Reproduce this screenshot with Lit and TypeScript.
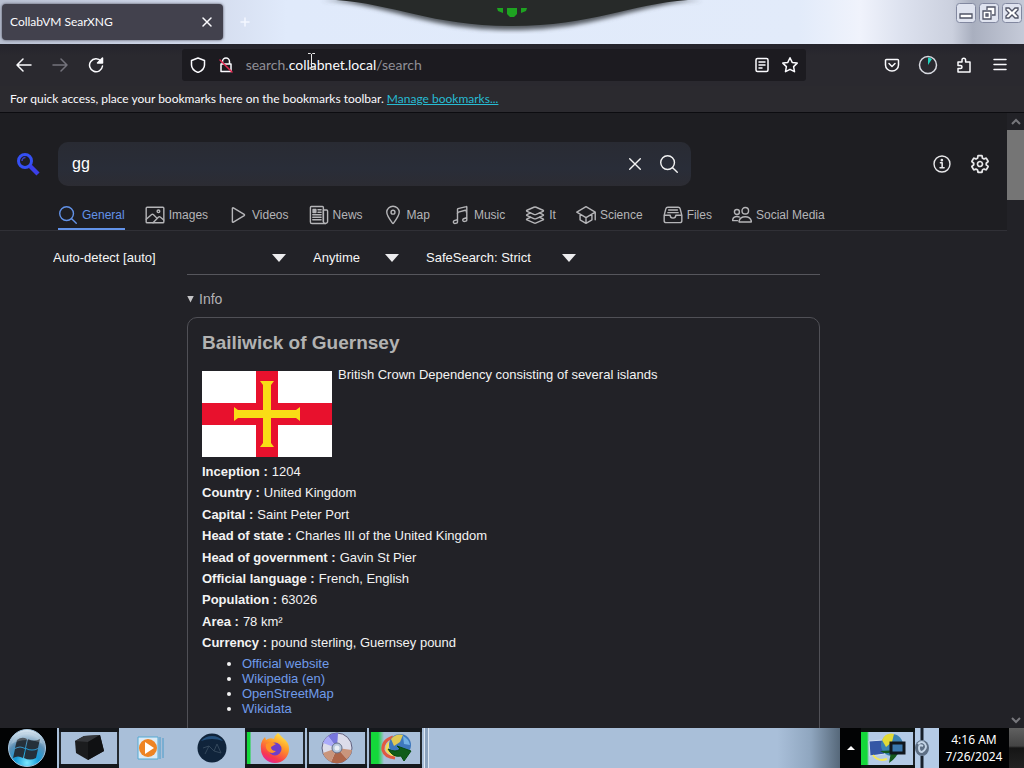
import { LitElement, html, css, svg } from "lit";
import { customElement } from "lit/decorators.js";

const ion = (body: unknown) => html`<svg class="ion" viewBox="0 0 512 512" aria-hidden="true">${body}</svg>`;

const searchGlyph = svg`<path d="M221 64a157 157 0 1 0 157 157A157 157 0 0 0 221 64z"/><path d="M338 338L448 448"/>`;
const wideSearchGlyph = svg`<circle cx="220" cy="220" r="176"/><path d="M350 350L468 468"/>`;

const categories = [
  { name: "General", icon: wideSearchGlyph },
  { name: "Images", icon: svg`<rect x="30" y="56" width="452" height="400" rx="24"/><circle cx="344" cy="160" r="34"/><path d="M304 336l-91-91a32 32 0 0 0-44-1L32 366M206 456l141-147a32 32 0 0 1 43-2l90 76"/>` },
  { name: "Videos", icon: svg`<path d="M112 86v340c0 14 12 22 26 14l276-168c12-8 12-24 0-32L138 72c-14-8-26 0-26 14z"/>` },
  { name: "News", icon: svg`<path d="M368 416V64a24 24 0 0 0-24-24H60a24 24 0 0 0-24 24v368a40 40 0 0 0 40 40h340"/><path d="M424 472a52 52 0 0 1-56-52V128h84a24 24 0 0 1 24 24v268a50 50 0 0 1-52 52z"/><path d="M230 120h80M230 184h80M96 248h214M96 312h214M96 376h214"/><path fill="currentColor" d="M104 112h72v80h-72z"/>` },
  { name: "Map", icon: svg`<path d="M256 32c-86 0-160 66-160 150 0 92 108 232 147 283a16 16 0 0 0 26 0c39-51 147-191 147-283 0-84-74-150-160-150z"/><circle cx="256" cy="184" r="50"/>` },
  { name: "Music", icon: svg`<path d="M192 218v-6c0-15 10-27 24-31l175-47a20 20 0 0 1 25 20v22"/><path d="M430 296v86c0 14-9 26-22 30l-30 9c-26 9-52-10-52-38a33 33 0 0 1 23-32l59-19c13-4 22-16 22-30V50a10 10 0 0 0-13-10L204 94a16 16 0 0 0-12 16v242c0 14-9 26-22 30l-62 20c-14 5-22 17-22 32 0 28 27 47 52 38l32-10c13-4 22-16 22-30v-80"/>` },
  { name: "It", icon: svg`<path d="M460 134l-174-76c-16-7-43-7-59 0L52 134c-18 8-18 21 0 29l174 76c17 8 44 8 61 0l174-76c17-8 17-21-1-29zM144 314l-92 40c-18 8-18 21 0 29l174 76c17 8 44 8 61 0l174-76c18-8 18-21 0-29l-90-40"/><path d="M144 204l-92 40c-18 8-18 21 0 29l174 76c17 8 44 8 61 0l174-76c18-8 18-21 0-29l-92-40"/>` },
  { name: "Science", icon: svg`<path d="M20 184L256 44l236 140-236 140L20 184zM104 236v144l152 88 152-88V236M492 380V184M256 324v144"/>` },
  { name: "Files", icon: svg`<path d="M388 56H124c-28 0-46 14-52 42L30 264v136a52 52 0 0 0 52 52h348a52 52 0 0 0 52-52V264L440 98c-6-28-26-42-52-42zM30 264h154M328 264h154M184 264a72 72 0 0 0 144 0M144 128h224M124 196h264"/>` },
  { name: "Social Media", icon: svg`<circle cx="340" cy="146" r="84"/><path d="M340 300c-80 0-144 36-160 116-2 10 4 18 12 18h292c8 0 14-8 12-18-16-80-76-116-156-116z"/><circle cx="126" cy="180" r="64"/><path d="M190 308c-20-10-42-13-62-13-56 0-104 30-112 92-2 8 2 14 10 14h114"/>` },
];

const facts = [
  ["Inception", "1204"],
  ["Country", "United Kingdom"],
  ["Capital", "Saint Peter Port"],
  ["Head of state", "Charles III of the United Kingdom"],
  ["Head of government", "Gavin St Pier"],
  ["Official language", "French, English"],
  ["Population", "63026"],
  ["Area", "78 km²"],
  ["Currency", "pound sterling, Guernsey pound"],
];

const sites = ["Official website", "Wikipedia (en)", "OpenStreetMap", "Wikidata"];

const resetStyles = css`
  * { box-sizing: border-box; }
  button { border: 0; padding: 0; margin: 0; background: none; color: inherit; font: inherit; display: grid; place-items: center; }
  svg { display: block; flex: none; }
`;

@customElement("browser-chrome")
export class BrowserChrome extends LitElement {
  static styles = [resetStyles, css`
    :host { display: block; flex: none; font: 12px/16px Lato, "Open Sans", sans-serif; color: #fbfbfe; }
    .strip {
      position: relative; height: 44px; padding: 4px 0 4px 2px; display: flex; align-items: center;
      background: linear-gradient(90deg, #b9c0d2 0, #d3dbed 20%, #e0eafb 28%, #e2ebfa 78%, #f0f3fc 84%, #dde2ef 88%, #cbd0de 93%, #a9afbf 95%, #c5cad8 100%);
    }
    .tab {
      width: 221px; height: 36px; padding: 0 10px 0 8px; border-radius: 4px; background: #42414d;
      display: flex; align-items: center; justify-content: space-between; box-shadow: 0 0 3px #4a4b5a;
    }
    .new { margin-left: 14px; color: #f4f7ff; width: 16px; height: 16px; }
    .curtain { position: absolute; top: 0; left: 318px; width: 388px; height: 34px; }
    .controls { position: absolute; top: 3px; right: 2px; display: flex; gap: 3px; }
    .nav { height: 42px; padding: 0 6px; display: flex; align-items: center; background: linear-gradient(#25242c, #2a292f 12px); }
    .nav button { width: 36px; height: 32px; }
    .dim { color: #74737c; }
    .gap { flex: 1 1 0; }
    .url {
      flex: 9 1 0; height: 32px; padding: 0 8px; display: flex; align-items: center; gap: 12px;
      background: #1c1b20; border-radius: 3px; font-size: 14px;
    }
    .address { flex: 1; color: #8f8e96; white-space: nowrap; }
    .host { color: #fbfbfe; }
    .marks { height: 27px; padding: 5px 10px 0; background: #2b2a2f; border-bottom: 1px solid #0c0c10; white-space: nowrap; }
    .marks a { color: #27bcd3; }
    .line { fill: none; stroke: currentColor; stroke-width: 1.5; stroke-linecap: round; stroke-linejoin: round; }
    .caret { position: absolute; left: 307px; top: 53px; }
  `];

  render() {
    return html`
      <div class="strip">
        <div class="tab">
          <span>CollabVM SearXNG</span>
          <button aria-label="Close tab"><svg class="line" width="12" height="12" viewBox="0 0 12 12"><path d="M2 2l8 8M10 2l-8 8"/></svg></button>
        </div>
        <button class="new" aria-label="New tab"><svg class="line" width="12" height="12" viewBox="0 0 12 12"><path d="M6 2v8M2 6h8"/></svg></button>
        <svg class="curtain" viewBox="0 0 388 34" aria-hidden="true">
          <defs><filter id="soft" x="-10%" y="-50%" width="120%" height="200%"><feGaussianBlur stdDeviation="2"/></filter></defs>
          <path filter="url(#soft)" fill="#555a60" d="M4 0C70 4 108 30 194 30S318 4 384 0z"/>
          <path fill="#272a29" d="M18 0C76 4 114 26 194 26S312 4 370 0z"/>
          <path fill="#1ea321" d="M179 8h6v5l-5-2zM209 8h-6v5l5-2zM189 8h10v6l-3 3h-4l-3-3z"/>
        </svg>
        <div class="controls">
          ${[
            ["Minimize", svg`<path d="M4 11h12v4H4z"/>`],
            ["Restore", svg`<path d="M8 7V4h8v8h-3M4 8h8v8H4zM7 11h2v2H7z"/>`],
            ["Close", svg`<path d="M4 5h3l3 3 3-3h3v2l-3 3 3 3v2h-3l-3-3-3 3H4v-2l3-3-3-3z"/>`],
          ].map(([label, d]) => html`<button aria-label=${label}><svg width="20" height="20" viewBox="0 0 20 20"><rect x="0.500" y="0.500" width="19" height="19" rx="3" fill="#dfe3ef" stroke="#8288a0"/><g fill="#fff" stroke="#505466" stroke-width="1.300">${d}</g></svg></button>`)}
        </div>
      </div>
      <div class="nav">
        <button aria-label="Back"><svg class="line" width="16" height="16" viewBox="0 0 16 16"><path d="M15 8H1M7 2L1 8l6 6"/></svg></button>
        <button class="dim" aria-label="Forward"><svg class="line" width="16" height="16" viewBox="0 0 16 16"><path d="M1 8h14M9 2l6 6-6 6"/></svg></button>
        <button aria-label="Reload"><svg class="line" width="16" height="16" viewBox="0 0 16 16"><path d="M13 4a6.500 6.500 0 1 0 1.500 5"/><path fill="currentColor" d="M14.500 1v5h-5z"/></svg></button>
        <span class="gap"></span>
        <div class="url">
          <svg class="line" width="16" height="16" viewBox="0 0 16 16"><path d="M8 1l6.500 2.500V8c0 3.500-3 6-6.500 7.500C4.500 14 1.500 11.500 1.500 8V3.500z"/></svg>
          <svg class="line" width="16" height="16" viewBox="0 0 16 16"><path d="M4.500 7V4.500a3.500 3.500 0 0 1 7 0V7M3 7h10v7.500H3z"/><path stroke="#e22850" d="M2 3l12 12"/></svg>
          <span class="address">search.<span class="host">collabnet.local</span>/search</span>
          <svg class="line" width="16" height="16" viewBox="0 0 16 16"><rect x="2" y="1.500" width="12" height="13" rx="1.500"/><path d="M5 5h6M5 8h6M5 11h3"/></svg>
          <svg class="line" width="16" height="16" viewBox="0 0 16 16"><path d="M8 .8l2.200 4.600 5 .7-3.600 3.500.9 5.100L8 12.300l-4.500 2.400.9-5.100L.8 6.100l5-.7z"/></svg>
        </div>
        <span class="gap"></span>
        <button aria-label="Pocket"><svg class="line" width="16" height="16" viewBox="0 0 16 16"><path d="M2.500 2.500h11a1 1 0 0 1 1 1V8a6.500 6 0 0 1-13 0V3.500a1 1 0 0 1 1-1zM5 6.500l3 3 3-3"/></svg></button>
        <button aria-label="Extension"><svg width="20" height="20" viewBox="0 0 20 20"><circle cx="10" cy="10" r="8.500" fill="none" stroke="#d7d9e0" stroke-width="1.500"/><path fill="#21d3bd" d="M10 10V2.500a8 8 0 0 1 4 1.500z"/></svg></button>
        <button aria-label="Extensions"><svg class="line" width="16" height="16" viewBox="0 0 16 16"><path d="M2 5h4V3a1.800 1.800 0 0 1 3.600 0v2H14v10H2v-3.500h2.500a1.500 1.500 0 0 0 0-3H2z"/></svg></button>
        <button aria-label="Menu"><svg class="line" width="16" height="16" viewBox="0 0 16 16"><path d="M2 2.500h12M2 7.500h12M2 12.500h12"/></svg></button>
      </div>
      <div class="marks">For quick access, place your bookmarks here on the bookmarks toolbar. <a href="#">Manage bookmarks...</a></div>
      <svg class="caret" width="9" height="16" viewBox="0 0 9 16" aria-hidden="true"><path fill="none" stroke="#e8e8e8" d="M1 .5h2.500l1 1 1-1H8M4.500 1v13M1 15h2.500l1-1 1 1H8"/></svg>
    `;
  }
}

@customElement("search-page")
export class SearchPage extends LitElement {
  static styles = [resetStyles, css`
    :host { display: flex; flex: 1 1 0; min-height: 0; overflow: hidden; background: #222227; color: #f3f3f3; font: 13px/16px "Liberation Sans", Arial, sans-serif; }
    main { flex: 1; min-width: 0; }
    a { color: #6f9bea; text-decoration: none; }
    .ion { width: 20px; height: 20px; fill: none; stroke: currentColor; stroke-width: 36; stroke-linejoin: round; stroke-linecap: round; }
    header { background: #1e1e22; border-bottom: 1px solid #303036; padding-top: 29px; }
    .top { display: flex; align-items: center; padding-right: 17px; }
    .logo { width: 58px; padding-left: 16px; }
    .box { flex: 0 1 633px; height: 44px; border-radius: 10px; background: linear-gradient(#292b33, #292d38 60%, #2c2c33); display: flex; align-items: center; padding: 0 12px 0 14px; }
    .box input { flex: 1; min-width: 0; border: 0; outline: 0; padding: 0; background: none; color: #fff; font: 16px/20px "Liberation Sans", Arial, sans-serif; }
    .box .clear { margin-right: 14px; }
    .tools { margin-left: auto; display: flex; gap: 18px; }
    .tools a { color: #e8e8ea; }
    .tabs { display: flex; gap: 20px; padding: 14px 0 0 58px; }
    .cat { display: flex; align-items: center; gap: 4px; height: 30px; padding-top: 2px; color: #b5b5b8; font-size: 12px; white-space: nowrap; border-bottom: 2px solid transparent; }
    .cat.on { color: #6292e8; border-color: #6292e8; }
    .filters { display: flex; gap: 27px; padding: 17px 0 0 53px; }
    .pick { display: grid; align-items: center; }
    .pick select { grid-area: 1 / 1; appearance: none; border: 0; background: none; color: #f6f6f6; font: inherit; height: 20px; padding: 0 26px 0 0; outline: 0; }
    .pick::after { content: ""; grid-area: 1 / 1; justify-self: end; width: 14px; height: 8px; background: #ececee; clip-path: polygon(0 0, 100% 0, 50% 100%); pointer-events: none; }
    .lang { width: 233px; }
    .time { width: 86px; }
    .safe { width: 150px; }
    .results { margin-left: 187px; max-width: 633px; margin-top: 6px; border-top: 1px solid #56565c; }
    summary { list-style: none; display: flex; align-items: center; gap: 5px; padding: 16px 0 10px; font-size: 14px; color: #b2b2b4; }
    summary::before { content: ""; width: 7px; height: 7px; background: #c4c4c6; clip-path: polygon(0 0, 100% 0, 50% 100%); }
    .card { border: 1px solid #505056; border-radius: 10px; padding: 13px 14px; min-height: 440px; }
    h2 { margin: 0 0 12px; font-size: 19px; line-height: 24px; color: #b2b2b2; }
    .intro { display: flex; gap: 6px; margin-bottom: 4px; }
    .intro p { margin: 0; }
    .flag { width: 130px; height: 86px; margin-top: 4px; }
    .facts { margin: 0 0 3px; display: flex; flex-direction: column; justify-content: space-between; min-height: 192px; line-height: 21px; }
    .fact { display: flex; gap: 4px; }
    dt { font-weight: bold; }
    dd { margin: 0; }
    ul { margin: 0; padding-left: 40px; line-height: 15px; }
    .bar { width: 17px; background: #222227; display: flex; flex-direction: column; align-items: center; color: #77777c; }
    .thumb { width: 17px; height: 70px; background: #757575; }
    .bar button { height: 17px; width: 17px; }
    .bar .down { margin-top: auto; }
    .thin { fill: none; stroke: currentColor; stroke-width: 2; }
  `];

  render() {
    return html`
      <main>
        <header>
          <div class="top">
            <a class="logo" href="#" aria-label="Home"><svg width="24" height="24" viewBox="0 0 24 24"><circle cx="9" cy="9" r="6.500" fill="none" stroke="#3550f4" stroke-width="3"/><path stroke="#3b3fe8" stroke-width="4.500" d="M14 14l8 8"/><path fill="none" stroke="#3d3fc4" stroke-width="1.500" d="M6 9a3.500 3.500 0 0 1 3.500-3.500"/></svg></a>
            <form class="box" role="search" @submit=${(e: Event) => e.preventDefault()}>
              <input aria-label="Search for" .value=${"gg"} />
              <button class="clear" type="reset" aria-label="Clear">${ion(svg`<path d="M392 392L120 120M392 120L120 392"/>`)}</button>
              <button type="submit" aria-label="Search">${ion(wideSearchGlyph)}</button>
            </form>
            <div class="tools">
              <a href="#" aria-label="About">${ion(svg`<circle cx="256" cy="256" r="204"/><path stroke-width="40" d="M216 224h44v128M206 352h104"/><circle cx="252" cy="158" r="16" fill="currentColor"/>`)}</a>
              <a href="#" aria-label="Preferences">${ion(svg`<path stroke-width="44" d="M262.300 192.300a64 64 0 1 0 57.400 57.400 64 64 0 0 0-57.400-57.400zM416.400 256a154 154 0 0 1-1.500 20.800l45.200 35.400a11 11 0 0 1 2.400 13.800l-42.800 74a11 11 0 0 1-13.100 4.600l-44.900-18a16 16 0 0 0-15.200 1.700A164 164 0 0 1 325 400.800a16 16 0 0 0-8.800 12.100l-6.700 47.900a11 11 0 0 1-10.700 9.200h-85.600a11 11 0 0 1-10.700-8.900l-6.700-47.800a16 16 0 0 0-9-12.200 155 155 0 0 1-21.500-12.600 16 16 0 0 0-15.100-1.700l-44.900 18.100a11 11 0 0 1-13.100-4.600l-42.800-74a11 11 0 0 1 2.500-13.700l38.200-30a16 16 0 0 0 6-14.100c-.4-4.200-.6-8.300-.6-12.500s.2-8.300.6-12.400a16 16 0 0 0-6.100-13.900l-38.200-30A11 11 0 0 1 49.500 186l42.700-74a11 11 0 0 1 13.200-4.600l44.900 18.100a16 16 0 0 0 15.200-1.800A164 164 0 0 1 187 111.200a16 16 0 0 0 8.800-12.100l6.700-47.900A11 11 0 0 1 213.200 42h85.600a11 11 0 0 1 10.700 8.900l6.700 47.800a16 16 0 0 0 9 12.200 155 155 0 0 1 21.500 12.600 16 16 0 0 0 15.100 1.700l44.900-18.100a11 11 0 0 1 13.100 4.600l42.800 74a11 11 0 0 1-2.500 13.700l-38.200 30a16 16 0 0 0-6 14.100c.3 4.200.5 8.300.5 12.500z"/>`)}</a>
            </div>
          </div>
          <nav class="tabs">
            ${categories.map((c, i) => html`<a href="#" class=${i === 0 ? "cat on" : "cat"}>${ion(c.icon)}<span>${c.name}</span></a>`)}
          </nav>
        </header>
        <div class="filters">
          <label class="pick lang"><select aria-label="Search language"><option>Auto-detect [auto]</option></select></label>
          <label class="pick time"><select aria-label="Time range"><option>Anytime</option></select></label>
          <label class="pick safe"><select aria-label="SafeSearch"><option>SafeSearch: Strict</option></select></label>
        </div>
        <section class="results">
          <details open>
            <summary>Info</summary>
            <article class="card">
              <h2>Bailiwick of Guernsey</h2>
              <div class="intro">
                <svg class="flag" viewBox="0 0 130 86" role="img" aria-label="Flag of Guernsey">
                  <path fill="#fff" d="M0 0h130v86H0z"/>
                  <path fill="#e8112d" d="M54 0h22v86H54zM0 32h130v22H0z"/>
                  <path fill="#f9dd16" d="M58 10h14l-3 4v25h25l4-3v14l-4-3H69v25l3 4H58l3-4V47H36l-4 3V36l4 3h25V14z"/>
                </svg>
                <p>British Crown Dependency consisting of several islands</p>
              </div>
              <dl class="facts">${facts.map(([k, v]) => html`<div class="fact"><dt>${k} :</dt><dd>${v}</dd></div>`)}</dl>
              <ul>${sites.map((s) => html`<li><a href="#">${s}</a></li>`)}</ul>
            </article>
          </details>
        </section>
      </main>
      <div class="bar">
        <button aria-label="Scroll up"><svg class="thin" width="10" height="8" viewBox="0 0 10 8"><path d="M1 6l4-4 4 4"/></svg></button>
        <div class="thumb"></div>
        <button class="down" aria-label="Scroll down"><svg class="thin" width="10" height="8" viewBox="0 0 10 8"><path d="M1 2l4 4 4-4"/></svg></button>
      </div>
    `;
  }
}

@customElement("task-bar")
export class TaskBar extends LitElement {
  static styles = [resetStyles, css`
    :host { display: flex; flex: none; height: 40px; background: #a9bfd9; font: 12px/17px "Noto Sans", "Open Sans", sans-serif; color: #fff; }
    .start { width: 57px; background: #020304; padding-right: 3px; }
    .app { width: 60px; margin-left: 2px; background: #a9bfd9; box-shadow: inset 0 4px 0 #15181c, inset 0 -4px 0 #15181c, inset 2px 0 0 #23292f, inset -2px 0 0 #23292f; }
    .plain { width: 62px; }
    .live { background: linear-gradient(90deg, #14d83a 5px, #a9bfd9 6px); }
    .wide { width: 53px; background: linear-gradient(90deg, #14d83a 9px, #a9bfd9 15px); }
    .fill { flex: 1; margin-left: 2px; background: linear-gradient(90deg, #a9bfd9 85%, #8fa6bf 93%, #56687a); box-shadow: inset 1px 0 0 #dde8f5, inset 4px 0 0 #8ca3be, inset 5px 0 0 #dbe6f3; }
    .tray { background: #020304; display: flex; align-items: center; }
    .more { width: 21px; height: 40px; }
    .icons { width: 78px; height: 40px; display: flex; align-items: center; background: #b4cbe6; }
    .pair { height: 40px; width: 54px; padding-left: 6px; display: flex; align-items: center; background: linear-gradient(90deg, #14d83a 6px, #b4cbe6 8px); box-shadow: inset 0 4px 0 #0d1210, inset 0 -3px 0 #0d1210, inset -2px 0 0 #1d2329; }
    .clock { width: 70px; text-align: center; }
    .peek { width: 15px; height: 40px; background: linear-gradient(#606060 0, #444 45%, #151515 50%, #222 100%); }
  `];

  render() {
    return html`
      <button class="start" aria-label="Start"><svg width="40" height="40" viewBox="0 0 40 40">
        <defs><radialGradient id="orb" cx=".5" cy=".9" r=".9"><stop offset="0" stop-color="#7de9ff"/><stop offset=".35" stop-color="#159bd8"/><stop offset=".65" stop-color="#5d8fb5"/><stop offset="1" stop-color="#e4eef6"/></radialGradient></defs>
        <circle cx="20" cy="20" r="18.500" fill="url(#orb)" stroke="#a6c6df"/>
        <path fill="#25303a" d="M10 12q5-4 10-1l-2 9q-5-3-10 0zM21 11q6 3 12 0l-2 9q-6 3-12 0zM8 21q5-3 10 0l-2 9q-5-3-10 0zM19 21q6 3 12 0l-2 9q-6 3-12 0z"/>
        <path fill="#fff" opacity=".2" d="M4 16a17 17 0 0 1 32 0q-16-8-32 0z"/></svg></button>
      <button class="app" aria-label="Virtual machine"><svg width="36" height="32" viewBox="0 0 36 32"><path fill="#1b1c1e" d="M4 9L13 4l16-1 4 16-16 9-12-7z"/><path fill="#34363a" d="M4 9l9-5 16-1-12 7z"/><path fill="#101113" d="M17 10l12-7 4 16-16 9z"/></svg></button>
      <button class="plain" aria-label="Media player"><svg width="30" height="28" viewBox="0 0 30 28"><path fill="#dbeaf6" stroke="#54a9d2" d="M3 3h20v22H3z"/><path stroke="#4a9cca" d="M25 3v22M28 4v20"/><circle cx="13" cy="14" r="9" fill="#ee8424"/><path fill="#fff" d="M10 8l9 6-9 6z"/></svg></button>
      <button class="plain" aria-label="Globe"><svg width="32" height="32" viewBox="0 0 32 32"><circle cx="16" cy="16" r="14.500" fill="#10243b"/><path fill="#24507c" d="M5 9A14.500 14.500 0 0 1 27 9q-11-4-22 0z"/><path fill="none" stroke="#33475b" d="M9 22l4-8 5 5 3-7 4 9M7 16l6-2M18 19l7 2"/></svg></button>
      <button class="app live" aria-label="Firefox"><svg width="32" height="32" viewBox="0 0 32 32"><defs><linearGradient id="fox" x1=".8" y1="0" x2=".3" y2="1"><stop offset="0" stop-color="#fff04a"/><stop offset=".4" stop-color="#ff9a28"/><stop offset=".8" stop-color="#f8394e"/><stop offset="1" stop-color="#e4209a"/></linearGradient></defs>
        <path fill="url(#fox)" d="M19 1q3 3 5 5 6 4 6 11a14 14 0 0 1-28 0Q1 10 6 5l1 3q4-3 8-1 1-4 4-6z"/><circle cx="16" cy="17" r="6.500" fill="#6f3ec9"/><path fill="#ff9227" d="M7 12q5-3 10 0l-5 3q0 4 5 4-4 4-8 0-3-3-2-7z"/></svg></button>
      <button class="app" aria-label="Disc"><svg width="32" height="32" viewBox="0 0 32 32"><circle cx="16" cy="16" r="15" fill="#dcdcea" stroke="#60607e"/><path fill="#7876dd" d="M16 16L7 4a15 15 0 0 1 10-3z"/><path fill="#aaaafa" d="M16 16L2 11a15 15 0 0 1 5-7z"/><path fill="#ad6549" d="M16 16l10 11a15 15 0 0 1-16 3z"/><path fill="#c9957c" d="M16 16l-6 14a15 15 0 0 1-8-9zM16 16l15 2a15 15 0 0 1-5 9z"/><circle cx="16" cy="16" r="5" fill="#b6c7dc" stroke="#66708a"/><circle cx="16" cy="16" r="2.500" fill="#e9eef5"/></svg></button>
      <button class="app live wide" aria-label="Download manager"><svg width="34" height="30" viewBox="0 0 34 30"><path fill="none" stroke="#e15942" stroke-width="3" d="M14 4Q3 8 4 17q2 7 12 8"/><path fill="none" stroke="#f5dc53" stroke-width="3" d="M15 7q-8 4-7 10 3 5 9 5"/><circle cx="21" cy="12" r="11" fill="#3e78bd"/><path fill="#e0c953" d="M12 6q5-6 12-4l-3 7-6 4z"/><path fill="#72b1e5" d="M24 3q6 3 7 9l-6-1z"/><path fill="#0f5c1a" stroke="#064b10" d="M9 16q8 4 12 0l-3-3 14 5-7 10-3-5Q14 25 9 16z"/></svg></button>
      <div class="fill"></div>
      <div class="tray">
        <button class="more" aria-label="Show hidden icons"><svg width="8" height="5" viewBox="0 0 8 5"><path fill="#fff" d="M4 0l4 4H0z"/></svg></button>
        <div class="icons">
          <div class="pair"><svg width="46" height="34" viewBox="0 2 46 34"><path fill="#3556a5" stroke="#d5e2f2" d="M2 12l14-1 2 14-15 2z"/><circle cx="25" cy="16" r="11" fill="#3c83b1"/><path fill="#e2da36" d="M15 11q4-8 12-6l-2 8-6 5z"/><path fill="#14591b" d="M13 22q6 4 11 1l-2 11q8-5 10-13z"/><path fill="none" stroke="#f3e758" stroke-width="2" d="M6 26q5 7 14 4"/><path fill="#3a78ad" stroke="#10161c" stroke-width="3" d="M24 14h13v10H24z"/></svg></div>
          <svg width="22" height="40" viewBox="0 0 22 40"><path stroke="#17202a" stroke-width="3" d="M7 0v12M7 28v12"/><ellipse cx="7" cy="20" rx="7" ry="8" fill="#5d6f84"/><path fill="none" stroke="#c3d4e6" stroke-width="2" d="M3 16q4-4 7 0t-3 8q-3 0-3-4t4-2"/></svg>
        </div>
        <div class="clock"><div>4:16 AM</div><div>7/26/2024</div></div>
        <div class="peek"></div>
      </div>
    `;
  }
}

@customElement("app-root")
export class AppRoot extends LitElement {
  static styles = css`:host { display: flex; flex-direction: column; height: 100vh; overflow: hidden; }`;

  render() {
    return html`<browser-chrome></browser-chrome><search-page></search-page><task-bar></task-bar>`;
  }
}
